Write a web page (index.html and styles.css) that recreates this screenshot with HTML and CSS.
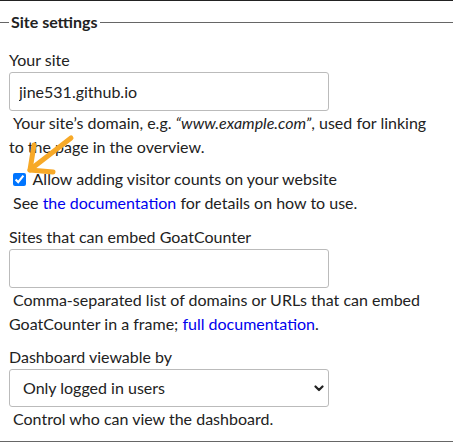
FILE: index.html
```html
<!DOCTYPE html>
<html lang="en">
<head>
<meta charset="utf-8">
<title>Site settings</title>
<link rel="stylesheet" href="styles.css">
</head>
<body>
<div class="topline"></div>
<fieldset class="settings">
  <legend>Site settings</legend>
  <div class="group">
    <label class="lbl" for="cname">Your site</label>
    <input class="field" id="cname" type="text" value="jine531.github.io">
    <p class="help">Your site’s domain, e.g. <em>“www.example.com”</em>, used for linking to the page in the overview.</p>
  </div>
  <div class="group group-check">
    <label class="check"><input class="box" type="checkbox" checked> Allow adding visitor counts on your website</label>
    <p class="help">See <a href="#">the documentation</a> for details on how to use.</p>
  </div>
  <div class="group group-embed">
    <label class="lbl" for="embed">Sites that can embed GoatCounter</label>
    <input class="field" id="embed" type="text" value="">
    <p class="help">Comma-separated list of domains or URLs that can embed GoatCounter in a frame; <a href="#">full documentation</a>.</p>
  </div>
  <div class="group group-last">
    <label class="lbl" for="view">Dashboard viewable by</label>
    <div class="selectwrap">
      <select class="select" id="view">
        <option>Only logged in users</option>
      </select>
      <svg class="chev" width="10" height="7" viewBox="0 0 10 7"><path d="M1.5 1.5 L5 5 L8.5 1.5" fill="none" stroke="#222" stroke-width="2.2" stroke-linecap="round" stroke-linejoin="round"/></svg>
    </div>
    <p class="help">Control who can view the dashboard.</p>
  </div>
</fieldset>
<svg class="arrow" width="453" height="445" viewBox="0 0 453 445">
  <g fill="none" stroke="#f7a928" stroke-width="5" stroke-linecap="round" stroke-linejoin="round">
    <path d="M71 138 L31 169"/>
    <path d="M30 170 L34 145"/>
    <path d="M30 170 L53 172"/>
  </g>
</svg>
</body>
</html>
```

FILE: styles.css
```css
html, body {
  margin: 0;
  padding: 0;
  background: #fff;
}

body {
  position: relative;
  font-family: Lato, "Noto Sans", sans-serif;
  font-size: 16px;
  line-height: 24px;
  color: #222;
}

.topline {
  height: 1px;
  background: #222;
}

.settings {
  margin: 9px 0 0;
  padding: 14px 18px 10px 9px;
  border: none;
  border-top: 1px solid #666;
  border-bottom: 1px solid #666;
  min-width: 0;
}

.settings legend {
  font-weight: bold;
  padding: 0 2px;
  line-height: 24px;
}

.group {
  margin-bottom: 8px;
}

.group-check {
  margin-bottom: 10px;
}

.group-embed {
  margin-bottom: 9px;
}

.group-last {
  margin-bottom: 0;
}

.lbl {
  display: block;
}

.field {
  display: block;
  box-sizing: border-box;
  width: 320px;
  height: 39px;
  margin: 0;
  padding: 0 9px;
  border: 1px solid #bbb;
  border-radius: 3px;
  font: inherit;
  color: #222;
  background: #fff;
}

.help {
  margin: 0;
  text-indent: 4px;
}

.help a {
  color: #0000ee;
  text-decoration: none;
}

.check {
  display: block;
}

.box {
  margin: 3px 3px 3px 4px;
  vertical-align: -1px;
}

.selectwrap {
  position: relative;
  width: 320px;
}

.select {
  display: block;
  box-sizing: border-box;
  width: 320px;
  height: 38px;
  margin: 0;
  padding: 0 13px;
  border: 1px solid #bbb;
  border-radius: 3px;
  font: inherit;
  color: #222;
  background: #fff;
  appearance: none;
  -webkit-appearance: none;
}

.chev {
  position: absolute;
  right: 5px;
  top: 16px;
  pointer-events: none;
}

.arrow {
  position: absolute;
  left: 0;
  top: 0;
  pointer-events: none;
}
```
